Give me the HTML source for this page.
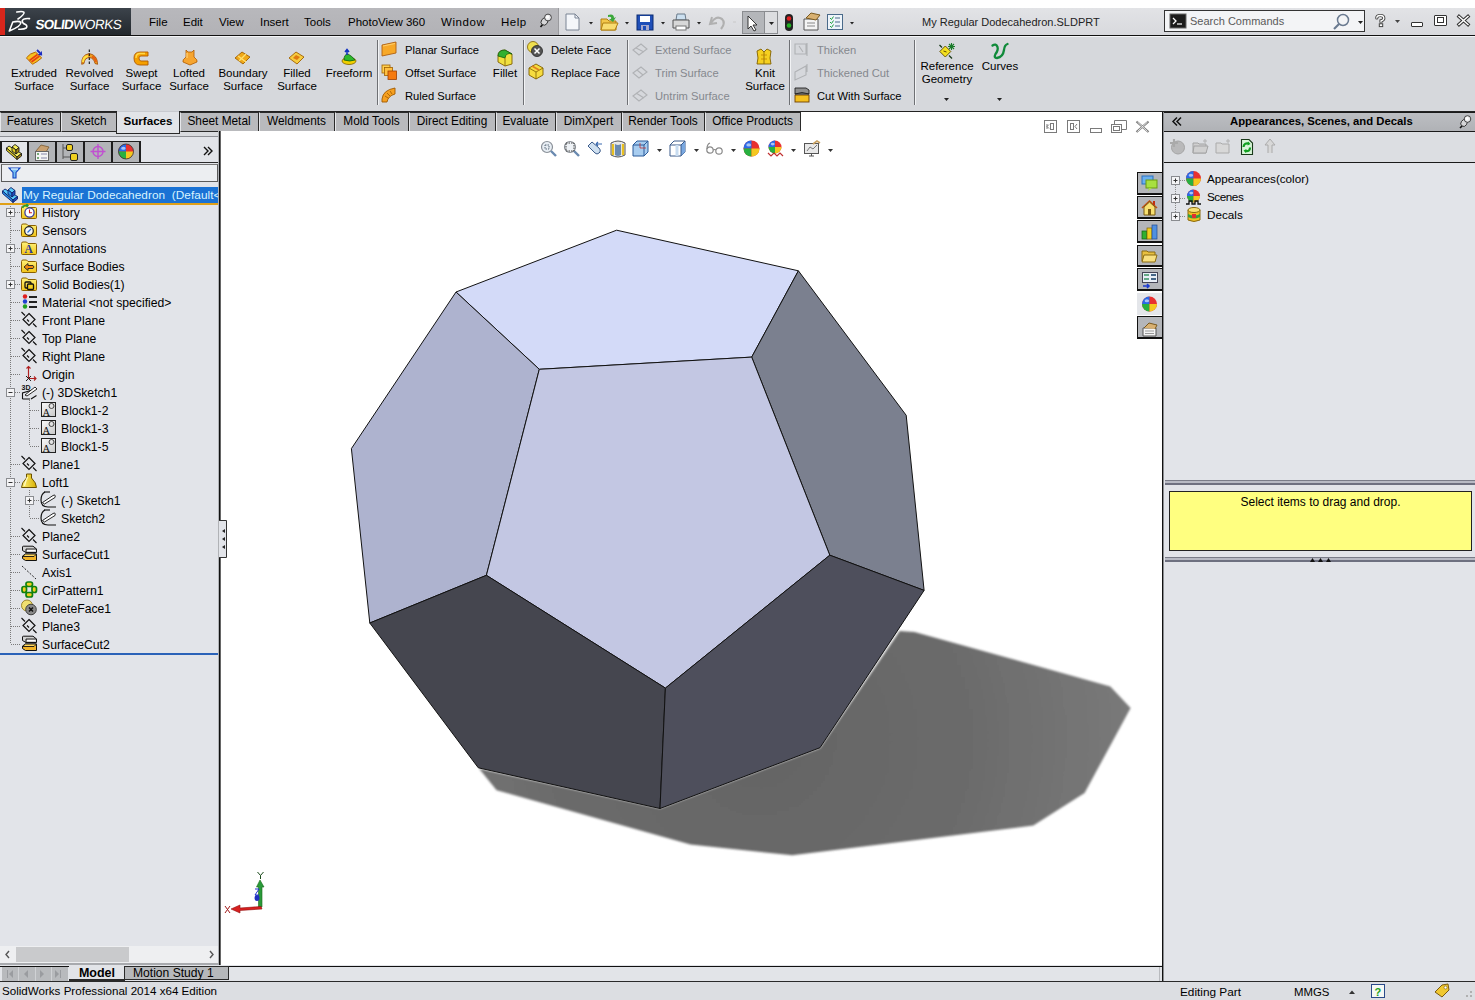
<!DOCTYPE html>
<html><head><meta charset="utf-8">
<style>
*{margin:0;padding:0;box-sizing:border-box}
html,body{width:1475px;height:1000px;overflow:hidden;background:#fff;font-family:"Liberation Sans",sans-serif;font-size:12px;color:#000}
.a{position:absolute}
.t{position:absolute;white-space:nowrap;line-height:14px}
</style></head><body>
<!-- title bar -->
<div class="a" style="left:0;top:8px;width:1475px;height:27px;background:linear-gradient(#e2e3e6,#d8d9dd)"></div>
<div class="a" style="left:0;top:8px;width:5px;height:27px;background:#d8261c"></div>
<div class="a" style="left:5px;top:8px;width:126px;height:27px;background:linear-gradient(#3c434b,#22272c)"></div>
<svg class="a" style="left:5px;top:8px" width="30" height="27" viewBox="5 8 30 27">
<g fill="none" stroke="#fff" stroke-width="1.6" stroke-linecap="round" stroke-linejoin="round">
<path d="M16.8 12 Q22.5 10.8 24 12.3 Q24.8 14 18 19"/>
<path d="M9.3 31 L12.8 22 Q19.5 20.5 20.8 22.5 Q21.5 26 9.3 31"/>
<path d="M29.5 18.6 Q23 18 22.2 21 Q22 23 25.5 24.5 Q27.8 26 26.2 28 Q24 29.5 18.8 29.2"/>
</g></svg>
<div class="t" style="left:35px;top:17px;font-size:13.4px;line-height:15px;color:#fff;font-weight:bold;letter-spacing:-0.7px;transform:skewX(-8deg);transform-origin:0 80%">SOLID<span style="font-weight:normal;letter-spacing:-0.45px">WORKS</span></div>
<div class="a" style="left:131px;top:8px;width:428px;height:27px;background:linear-gradient(#b8b8bc,#b2b2b6)"></div>
<div class="t" style="left:149px;top:15px;font-size:11.5px;color:#000">File</div>
<div class="t" style="left:183px;top:15px;font-size:11.5px;color:#000">Edit</div>
<div class="t" style="left:219px;top:15px;font-size:11.5px;color:#000">View</div>
<div class="t" style="left:260px;top:15px;font-size:11.5px;color:#000">Insert</div>
<div class="t" style="left:304px;top:15px;font-size:11.5px;color:#000">Tools</div>
<div class="t" style="left:348px;top:15px;font-size:11.5px;color:#000">PhotoView 360</div>
<div class="t" style="left:441px;top:15px;font-size:11.5px;color:#000;letter-spacing:0.6px">Window</div>
<div class="t" style="left:501px;top:15px;font-size:11.5px;color:#000;letter-spacing:0.5px">Help</div>
<svg class="a" style="left:536px;top:10px" width="22" height="22" viewBox="536 10 22 22"><path d="M543 24 L540.5 27" stroke="#111" stroke-width="1.6"/><ellipse cx="544.5" cy="21.5" rx="3.2" ry="3.8" transform="rotate(35 544.5 21.5)" fill="#d6d6d8" stroke="#333" stroke-width="0.9"/><circle cx="548" cy="17.5" r="3.4" fill="#ececee" stroke="#333" stroke-width="0.9"/><circle cx="547.5" cy="17" r="1.6" fill="#fff"/></svg><div class="a" style="left:558px;top:8px;width:1px;height:27px;background:#9a9a9e"></div>
<!-- quick access toolbar -->
<svg class="a" style="left:559px;top:8px" width="300" height="27" viewBox="559 8 300 27">
<g>
<path d="M566 14 H575 L579 18 V30 H566 Z" fill="#f4f6fa" stroke="#7a8494"/><path d="M575 14 V18 H579" fill="none" stroke="#7a8494"/>
<path d="M589 22 h4 l-2 2.5z" fill="#222"/>
<path d="M601 19 H607 L609 21 H616 V30 H601 Z" fill="#f2c64a" stroke="#b07e10"/><path d="M603 23 H618 L615 30 H601 Z" fill="#f8dc70" stroke="#b07e10"/><path d="M608 15 Q614 13 614 18 l2 -1 -3 5 -4 -3 2 0 Q612 16 608 17z" fill="#3ba83b"/>
<path d="M625 22 h4 l-2 2.5z" fill="#222"/>
<rect x="637" y="15" width="16" height="15" fill="#1f4fb8" stroke="#0a2a70"/><rect x="640" y="16" width="10" height="6" fill="#fff"/><rect x="641" y="25" width="8" height="5" fill="#aac"/><rect x="643" y="26" width="3" height="4" fill="#1f4fb8"/>
<path d="M661 22 h4 l-2 2.5z" fill="#222"/>
<path d="M677 14 H685 L686 20 H676 Z" fill="#cce0f0" stroke="#6a7a8a"/><path d="M673 20 H689 V28 H673 Z" fill="#d8d8d8" stroke="#555"/><rect x="676" y="26" width="10" height="4" fill="#fff" stroke="#777"/>
<path d="M697 22 h4 l-2 2.5z" fill="#222"/>
<path d="M712 17 L710 24 L717 23" fill="none" stroke="#b0b0b0" stroke-width="2"/><path d="M711 23 Q716 15 722 19 Q726 23 721 29" fill="none" stroke="#b0b0b0" stroke-width="2.2"/>
<path d="M733 22 h3" stroke="#c8c8c8"/>
<rect x="742.5" y="11.5" width="22" height="22" fill="#b4b6ba" stroke="#8a8c90"/><rect x="764.5" y="11.5" width="13" height="22" fill="#dcdde0" stroke="#8a8c90"/>
<path d="M748 16 L748 29 L751 26 L754 31 L756 30 L753 25 L757 25 Z" fill="#fff" stroke="#222" stroke-width="0.9"/>
<path d="M769 22 h5 l-2.5 3z" fill="#222"/>
<rect x="785" y="14" width="8" height="17" rx="4" fill="#222"/><circle cx="789" cy="18.5" r="2.3" fill="#e02020"/><circle cx="789" cy="25.5" r="2.3" fill="#20b020"/>
<path d="M804 19 H818 V30 H804 Z" fill="#f4f4f4" stroke="#555"/><path d="M806 18 L811 13 L820 15 L816 20 Z" fill="#d8b070" stroke="#7a5a20"/><path d="M807 23 H815 M807 26 H815" stroke="#888"/>
<rect x="827.5" y="14.5" width="15" height="15" fill="#eef4fa" stroke="#4a6a8a"/><path d="M830 18 l1.5 1.5 2-3 M830 22 l1.5 1.5 2-3 M830 26 l1.5 1.5 2-3" stroke="#20a040" fill="none"/><path d="M835 18 H840 M835 22 H840 M835 26 H840" stroke="#4a6a8a"/>
<path d="M850 22 h4 l-2 2.5z" fill="#222"/>
</g></svg>
<div class="t" style="left:922px;top:15px;font-size:11px;color:#222">My Regular Dodecahedron.SLDPRT</div>
<!-- search -->
<div class="a" style="left:1164px;top:10px;width:201px;height:22px;background:#f3f4f6;border:1px solid #333"></div>
<svg class="a" style="left:1169px;top:13px" width="18" height="16" viewBox="0 0 18 16"><rect x="1" y="1" width="16" height="14" fill="#1c1c1c" stroke="#666"/><path d="M4 5 L7 8 L4 11" stroke="#fff" fill="none" stroke-width="1.3"/><path d="M8 11 H13" stroke="#fff" stroke-width="1.2"/></svg>
<div class="t" style="left:1190px;top:14px;font-size:11px;color:#5a5a5a">Search Commands</div>
<svg class="a" style="left:1332px;top:12px" width="34" height="20" viewBox="0 0 34 20"><circle cx="11" cy="8" r="5.5" fill="none" stroke="#6a7a90" stroke-width="1.5"/><path d="M7 12 L2 17" stroke="#6a7a90" stroke-width="2.2"/><path d="M26 9 h5 l-2.5 3z" fill="#222"/></svg>
<svg class="a" style="left:1370px;top:10px" width="105" height="22" viewBox="1370 10 105 22">
<path d="M1376.8 18 Q1376.8 15.5 1380.3 15.5 Q1383.8 15.5 1383.8 18.2 Q1383.8 20 1381 20.8 V22" fill="none" stroke="#444" stroke-width="3.2" stroke-linecap="round"/><path d="M1376.8 18 Q1376.8 15.5 1380.3 15.5 Q1383.8 15.5 1383.8 18.2 Q1383.8 20 1381 20.8 V22" fill="none" stroke="#fff" stroke-width="1.3" stroke-linecap="round"/><rect x="1379.3" y="23.8" width="3.4" height="2.8" fill="#fff" stroke="#444" stroke-width="1"/>
<path d="M1395 20 h5 l-2.5 3z" fill="#444"/>
<rect x="1411.5" y="22.5" width="11" height="4" rx="0.5" fill="#fff" stroke="#333" stroke-width="1"/>
<rect x="1434.5" y="15.5" width="12" height="10" rx="0.5" fill="#fff" stroke="#333" stroke-width="1"/><rect x="1437.5" y="17.5" width="6" height="5" fill="#fff" stroke="#333" stroke-width="1"/>
<path d="M1459 16.5 L1468 24.5 M1468 16.5 L1459 24.5" stroke="#333" stroke-width="3.4" stroke-linecap="square"/><path d="M1459 16.5 L1468 24.5 M1468 16.5 L1459 24.5" stroke="#fff" stroke-width="1.5" stroke-linecap="square"/>
</svg>
<div class="a" style="left:0;top:35px;width:1475px;height:1px;background:#111"></div>
<div class="a" style="left:0;top:36px;width:1475px;height:1px;background:#f4f5f7"></div>
<!-- command manager -->
<div class="a" style="left:0;top:37px;width:1475px;height:75px;background:#d6d8dc"></div>
<div class="a" style="left:0;top:111px;width:1475px;height:1px;background:#222"></div>
<div class="t" style="left:-6px;width:80px;text-align:center;top:67px;font-size:11.5px;line-height:13.3px;color:#000">Extruded<br>Surface</div>
<div class="t" style="left:49.5px;width:80px;text-align:center;top:67px;font-size:11.5px;line-height:13.3px;color:#000">Revolved<br>Surface</div>
<div class="t" style="left:101.5px;width:80px;text-align:center;top:67px;font-size:11.5px;line-height:13.3px;color:#000">Swept<br>Surface</div>
<div class="t" style="left:149px;width:80px;text-align:center;top:67px;font-size:11.5px;line-height:13.3px;color:#000">Lofted<br>Surface</div>
<div class="t" style="left:203px;width:80px;text-align:center;top:67px;font-size:11.5px;line-height:13.3px;color:#000">Boundary<br>Surface</div>
<div class="t" style="left:257px;width:80px;text-align:center;top:67px;font-size:11.5px;line-height:13.3px;color:#000">Filled<br>Surface</div>
<div class="t" style="left:309px;width:80px;text-align:center;top:67px;font-size:11.5px;line-height:13.3px;color:#000">Freeform<br></div>
<div class="t" style="left:405px;top:43px;font-size:11.2px;color:#000">Planar Surface</div>
<div class="t" style="left:405px;top:66px;font-size:11.2px;color:#000">Offset Surface</div>
<div class="t" style="left:405px;top:89px;font-size:11.2px;color:#000">Ruled Surface</div>
<div class="t" style="left:551px;top:43px;font-size:11.2px;color:#000">Delete Face</div>
<div class="t" style="left:551px;top:66px;font-size:11.2px;color:#000">Replace Face</div>
<div class="t" style="left:655px;top:43px;font-size:11.2px;color:#85888e">Extend Surface</div>
<div class="t" style="left:655px;top:66px;font-size:11.2px;color:#85888e">Trim Surface</div>
<div class="t" style="left:655px;top:89px;font-size:11.2px;color:#85888e">Untrim Surface</div>
<div class="t" style="left:817px;top:43px;font-size:11.2px;color:#85888e">Thicken</div>
<div class="t" style="left:817px;top:66px;font-size:11.2px;color:#85888e">Thickened Cut</div>
<div class="t" style="left:817px;top:89px;font-size:11.2px;color:#000">Cut With Surface</div>
<div class="t" style="left:465px;width:80px;text-align:center;top:67px;font-size:11.5px;line-height:13.3px">Fillet</div>
<div class="t" style="left:725px;width:80px;text-align:center;top:67px;font-size:11.5px;line-height:13.3px">Knit<br>Surface</div>
<div class="t" style="left:907px;width:80px;text-align:center;top:60px;font-size:11.5px;line-height:13.3px">Reference<br>Geometry</div>
<div class="t" style="left:960px;width:80px;text-align:center;top:60px;font-size:11.5px;line-height:13.3px">Curves</div>
<div class="a" style="left:377px;top:40px;width:1px;height:65px;background:#6e7074"></div><div class="a" style="left:378px;top:40px;width:1px;height:65px;background:#f2f3f5"></div>
<div class="a" style="left:523px;top:40px;width:1px;height:65px;background:#6e7074"></div><div class="a" style="left:524px;top:40px;width:1px;height:65px;background:#f2f3f5"></div>
<div class="a" style="left:627px;top:40px;width:1px;height:65px;background:#6e7074"></div><div class="a" style="left:628px;top:40px;width:1px;height:65px;background:#f2f3f5"></div>
<div class="a" style="left:789px;top:40px;width:1px;height:65px;background:#6e7074"></div><div class="a" style="left:790px;top:40px;width:1px;height:65px;background:#f2f3f5"></div>
<div class="a" style="left:914px;top:40px;width:1px;height:65px;background:#6e7074"></div><div class="a" style="left:915px;top:40px;width:1px;height:65px;background:#f2f3f5"></div>
<svg class="a" style="left:0;top:37px" width="1030" height="74" viewBox="0 37 1030 74">
<!-- extruded -->
<path d="M26.4 57.9 Q30 53 35.6 52.1 L41.7 57.9 Q37 62 32.5 64.3z" fill="#f6c020" stroke="#b06000" stroke-width="0.9" stroke-linejoin="round"/>
<path d="M29.5 60.5 L37.5 54.5 M31.5 62 L39.5 56" stroke="#e84010" stroke-width="1.6"/>
<path d="M37 50 L40 53" stroke="#1a2ac0" stroke-width="1.8"/><path d="M42.2 55.5 L37.8 55 L41.8 51z" fill="#1a2ac0"/>
<!-- revolved -->
<path d="M81.7 64.3 Q81 55 89.2 53.5 Q97.5 55 97.6 64.3 L95 63.5 Q94 58 89.2 57.5 Q84.5 58 84 63.5z" fill="#f0a020" stroke="#a04800" stroke-width="0.8" stroke-linejoin="round"/>
<path d="M83 62 Q83 57 88 56" stroke="#ffe040" stroke-width="2" fill="none"/>
<path d="M92 56.5 Q95.5 58 96 62" stroke="#e86010" stroke-width="2" fill="none"/>
<path d="M89.3 49.5 V65" stroke="#111" stroke-width="1.1" stroke-dasharray="2.5 1.5"/>
<!-- swept -->
<g transform="translate(133,50)">
<path d="M15 2 H7 Q1 2 1 8 Q1 15 7 15 H15 V11 H8 Q6 11 6 8 Q6 6 8 6 H15z" fill="#f5a000" stroke="#b05a00" stroke-width="0.9"/>
<path d="M12 3.5 H7 Q3 3.5 3 8" stroke="#ffd84a" stroke-width="1.4" fill="none"/>
</g>
<!-- lofted -->
<g transform="translate(182,49)">
<path d="M4 1 L6 3 L10 3 L12 1 L12 8 Q16 11 15 13 L8 16 L1 13 Q0 11 4 8z" fill="#f6a530" stroke="#b05a00" stroke-width="0.8"/>
<path d="M5 4 L5 9" stroke="#ffd070" stroke-width="1.3"/>
</g>
<!-- boundary -->
<g transform="translate(234,51)">
<path d="M1 7 L8 1 L16 6 L9 13z" fill="#f0a818" stroke="#a06000" stroke-width="0.9"/>
<path d="M4 5 L12 11 M12 3 L5 10" stroke="#ffe070" stroke-width="1.3"/>
</g>
<!-- filled -->
<g transform="translate(288,51)">
<path d="M1 7 L8 1 L16 6 L9 13z" fill="#f6cc40" stroke="#a06000" stroke-width="0.9"/>
<path d="M5 7 L8 4 L12 6 L9 9z" fill="#e07a10"/>
</g>
<!-- freeform -->
<g transform="translate(341,49)">
<ellipse cx="8" cy="12" rx="7" ry="3.5" fill="#f0d000" stroke="#806000" stroke-width="0.8"/>
<path d="M3 11 Q3 5 7 5 Q11 7 14 11 Q9 13 3 11z" fill="#2eb82e" stroke="#106010" stroke-width="0.8"/>
<path d="M6 6 V1 M4 3 L6 0.5 L8 3" stroke="#1030c0" stroke-width="1.5" fill="none"/>
</g>
<!-- planar -->
<g transform="translate(381,41)">
<path d="M1 4 L15 1 V12 L1 15z" fill="#f7a828" stroke="#b06010" stroke-width="0.9"/>
<path d="M2 5 L14 2.5" stroke="#ffd070" stroke-width="1"/>
</g>
<!-- offset -->
<g transform="translate(381,64)">
<rect x="1" y="1" width="8" height="8" fill="#ffd050" stroke="#a06000" stroke-width="0.8"/>
<rect x="3.5" y="3.5" width="8" height="8" fill="#ffc040" stroke="#a06000" stroke-width="0.8"/>
<rect x="7" y="7" width="8.5" height="8.5" fill="#f57a10" stroke="#a04000" stroke-width="0.8"/>
</g>
<!-- ruled -->
<g transform="translate(381,87)">
<path d="M1 12 Q2 3 14 1 V7 Q7 9 6 15 H1z" fill="#f6a020" stroke="#a05a00" stroke-width="0.9"/>
<path d="M4 9 L7 11 M6 6 L9 9 M9 4 L11 7" stroke="#a05a00" stroke-width="0.8"/>
</g>
<!-- fillet -->
<g transform="translate(497,49)">
<path d="M1 7 Q1 1 8 1 L15 5 V15 L8 17 L1 13z" fill="#f0e040" stroke="#806000" stroke-width="0.9"/>
<path d="M1 7 Q1 1 8 1 L15 5 Q9 3 8 9 L1 7z" fill="#30b030" stroke="#106010" stroke-width="0.8"/>
<path d="M8 9 V17" stroke="#806000" stroke-width="0.8"/>
</g>
<!-- delete face -->
<g transform="translate(527,41)">
<ellipse cx="6" cy="6" rx="5.5" ry="5.5" fill="#f0e050" stroke="#806000" stroke-width="0.8"/>
<circle cx="10" cy="10" r="5.5" fill="#555" stroke="#222" stroke-width="0.8"/>
<path d="M7.5 7.5 L12.5 12.5 M12.5 7.5 L7.5 12.5" stroke="#fff" stroke-width="1.5"/>
</g>
<!-- replace face -->
<g transform="translate(528,63)">
<path d="M1 5 L8 1 L15 5 V12 L8 16 L1 12z" fill="#f6dc40" stroke="#806000" stroke-width="0.9"/>
<path d="M1 5 L8 9 L15 5 M8 9 V16" stroke="#806000" stroke-width="0.8" fill="none"/>
<path d="M4 3 L11 7" stroke="#e08020" stroke-width="1.5"/>
</g>
<!-- extend/trim/untrim gray -->
<g fill="none" stroke="#b0b2b5" stroke-width="1.1">
<path d="M633 50 L641 44 L647 49 L639 55z M636 48 L644 52"/>
<path d="M633 73 L641 67 L647 72 L639 78z M637 70 L643 75"/>
<path d="M633 96 L641 90 L647 95 L639 101z M636 93 L644 98"/>
<path d="M795 44 H806 V54 H795z M807 43 V56 M799 46 L803 52"/>
<path d="M795 72 L806 66 V75 L795 80z M807 64 V72"/>
</g>
<!-- knit -->
<g transform="translate(756,48)">
<path d="M1 3 L5 1 L8 4 L11 1 L15 3 L14 10 L15 16 H1 L2 10z" fill="#f5d020" stroke="#806000" stroke-width="0.9"/>
<path d="M8 4 V16" stroke="#806000" stroke-width="0.8"/><path d="M5 7 H11 M5 11 H11" stroke="#c08000" stroke-width="0.8"/>
</g>
<!-- cut with surface -->
<g transform="translate(794,87)">
<rect x="1" y="8" width="14" height="7" fill="#f5c020" stroke="#704000" stroke-width="0.9"/>
<path d="M1 1 H12 L15 3 V7 H1z" fill="#909090" stroke="#202020" stroke-width="0.9"/>
<path d="M1 7 Q8 4 15 7" stroke="#202020" stroke-width="0.9" fill="none"/>
</g>
<!-- reference geometry -->
<path d="M939.5 45 L942 47.5 M949 55.5 L952 58.5" stroke="#1a3a1a" stroke-width="1.3"/>
<path d="M945.3 46 L950.8 51.5 L945.3 57 L939.8 51.5z" fill="#f4e020" stroke="#5a4a00" stroke-width="0.9"/>
<path d="M943.5 51 L946.5 52" stroke="#5a4a00" stroke-width="1"/>
<path d="M951.5 43 V50 M948 46.5 H955 M949 44 L954 49 M954 44 L949 49" stroke="#1a7a2a" stroke-width="1.1"/>
<path d="M944 98 h5 l-2.5 3z" fill="#222"/>
<!-- curves -->
<path d="M992.5 45.5 Q996 43 997.5 47 Q998.5 50 995.5 54 Q993.5 58 997 58 Q1003 57 1004 50 Q1004.5 45 1007.5 44" fill="none" stroke="#108a3a" stroke-width="2.3" stroke-linecap="round"/>
<path d="M997 98 h5 l-2.5 3z" fill="#222"/>
</svg>
<!-- tabs row -->
<div class="a" style="left:0;top:112px;width:1475px;height:24px;background:#fff"></div>
<div class="a" style="left:0px;top:112px;width:60px;height:20px;background:#b9babd;border-top:1px solid #2a2a2a;border-bottom:1px solid #2a2a2a;border-left:1px solid #e6e7ea"></div>
<div class="t" style="left:0px;width:60px;text-align:center;top:114px;font-size:11.85px;color:#000">Features</div>
<div class="a" style="left:60px;top:112px;width:1px;height:20px;background:#2a2a2a"></div>
<div class="a" style="left:61px;top:112px;width:55px;height:20px;background:#b9babd;border-top:1px solid #2a2a2a;border-bottom:1px solid #2a2a2a;border-left:1px solid #e6e7ea"></div>
<div class="t" style="left:61px;width:55px;text-align:center;top:114px;font-size:11.85px;color:#000">Sketch</div>
<div class="a" style="left:116px;top:112px;width:1px;height:20px;background:#2a2a2a"></div>
<div class="a" style="left:117px;top:111px;width:62px;height:23px;background:#e2e4e8;border-bottom:1px solid #2a2a2a;border-top:1px solid #c8cacf"></div>
<div class="t" style="left:117px;width:62px;text-align:center;top:114px;font-size:11.6px;font-weight:bold;color:#000">Surfaces</div>
<div class="a" style="left:179px;top:112px;width:1px;height:20px;background:#2a2a2a"></div>
<div class="a" style="left:180px;top:112px;width:78px;height:20px;background:#b9babd;border-top:1px solid #2a2a2a;border-bottom:1px solid #2a2a2a;border-left:1px solid #e6e7ea"></div>
<div class="t" style="left:180px;width:78px;text-align:center;top:114px;font-size:11.85px;color:#000">Sheet Metal</div>
<div class="a" style="left:258px;top:112px;width:1px;height:20px;background:#2a2a2a"></div>
<div class="a" style="left:259px;top:112px;width:75px;height:20px;background:#b9babd;border-top:1px solid #2a2a2a;border-bottom:1px solid #2a2a2a;border-left:1px solid #e6e7ea"></div>
<div class="t" style="left:259px;width:75px;text-align:center;top:114px;font-size:11.85px;color:#000">Weldments</div>
<div class="a" style="left:334px;top:112px;width:1px;height:20px;background:#2a2a2a"></div>
<div class="a" style="left:335px;top:112px;width:73px;height:20px;background:#b9babd;border-top:1px solid #2a2a2a;border-bottom:1px solid #2a2a2a;border-left:1px solid #e6e7ea"></div>
<div class="t" style="left:335px;width:73px;text-align:center;top:114px;font-size:11.85px;color:#000">Mold Tools</div>
<div class="a" style="left:408px;top:112px;width:1px;height:20px;background:#2a2a2a"></div>
<div class="a" style="left:409px;top:112px;width:86px;height:20px;background:#b9babd;border-top:1px solid #2a2a2a;border-bottom:1px solid #2a2a2a;border-left:1px solid #e6e7ea"></div>
<div class="t" style="left:409px;width:86px;text-align:center;top:114px;font-size:11.85px;color:#000">Direct Editing</div>
<div class="a" style="left:495px;top:112px;width:1px;height:20px;background:#2a2a2a"></div>
<div class="a" style="left:496px;top:112px;width:59px;height:20px;background:#b9babd;border-top:1px solid #2a2a2a;border-bottom:1px solid #2a2a2a;border-left:1px solid #e6e7ea"></div>
<div class="t" style="left:496px;width:59px;text-align:center;top:114px;font-size:11.85px;color:#000">Evaluate</div>
<div class="a" style="left:555px;top:112px;width:1px;height:20px;background:#2a2a2a"></div>
<div class="a" style="left:556px;top:112px;width:65px;height:20px;background:#b9babd;border-top:1px solid #2a2a2a;border-bottom:1px solid #2a2a2a;border-left:1px solid #e6e7ea"></div>
<div class="t" style="left:556px;width:65px;text-align:center;top:114px;font-size:11.85px;color:#000">DimXpert</div>
<div class="a" style="left:621px;top:112px;width:1px;height:20px;background:#2a2a2a"></div>
<div class="a" style="left:622px;top:112px;width:82px;height:20px;background:#b9babd;border-top:1px solid #2a2a2a;border-bottom:1px solid #2a2a2a;border-left:1px solid #e6e7ea"></div>
<div class="t" style="left:622px;width:82px;text-align:center;top:114px;font-size:11.85px;color:#000">Render Tools</div>
<div class="a" style="left:704px;top:112px;width:1px;height:20px;background:#2a2a2a"></div>
<div class="a" style="left:705px;top:112px;width:95px;height:20px;background:#b9babd;border-top:1px solid #2a2a2a;border-bottom:1px solid #2a2a2a;border-left:1px solid #e6e7ea"></div>
<div class="t" style="left:705px;width:95px;text-align:center;top:114px;font-size:11.85px;color:#000">Office Products</div>
<div class="a" style="left:800px;top:112px;width:1px;height:20px;background:#2a2a2a"></div>
<!-- left panel -->
<div class="a" style="left:0;top:132px;width:219px;height:833px;background:#e2e4e9"></div>
<div class="a" style="left:0;top:132px;width:219px;height:4px;background:#d9dbdf"></div>
<div class="a" style="left:0;top:136px;width:219px;height:1px;background:#8e9096"></div>
<div class="a" style="left:116px;top:132px;width:64px;height:1px;background:#e2e4e8"></div><div class="a" style="left:116px;top:112px;width:1px;height:22px;background:#2a2a2a"></div><div class="a" style="left:179px;top:112px;width:1px;height:22px;background:#2a2a2a"></div><div class="a" style="left:116px;top:133px;width:64px;height:1px;background:#2a2a2a"></div>
<div class="a" style="left:0;top:137px;width:219px;height:4px;background:#e2e4e9"></div>
<div class="a" style="left:0;top:141px;width:141px;height:1px;background:#1e1e1e"></div>
<div class="a" style="left:0;top:142px;width:219px;height:20px;background:#e2e4e9"></div>
<div class="a" style="left:0;top:162px;width:219px;height:1px;background:#2a2a2a"></div>
<div class="a" style="left:1px;top:142px;width:26px;height:20px;background:#e3e5e9"></div><div class="a" style="left:27px;top:141px;width:2px;height:21px;background:#1e1e1e"></div>
<div class="a" style="left:29px;top:142px;width:26px;height:20px;background:#b2b4b7"></div><div class="a" style="left:55px;top:141px;width:2px;height:21px;background:#1e1e1e"></div>
<div class="a" style="left:57px;top:142px;width:26px;height:20px;background:#b2b4b7"></div><div class="a" style="left:83px;top:141px;width:2px;height:21px;background:#1e1e1e"></div>
<div class="a" style="left:85px;top:142px;width:26px;height:20px;background:#b2b4b7"></div><div class="a" style="left:111px;top:141px;width:2px;height:21px;background:#1e1e1e"></div>
<div class="a" style="left:113px;top:142px;width:26px;height:20px;background:#b2b4b7"></div><div class="a" style="left:139px;top:141px;width:2px;height:21px;background:#1e1e1e"></div>
<div class="a" style="left:0;top:141px;width:1.5px;height:21px;background:#1e1e1e"></div>
<svg class="a" style="left:0;top:141px" width="219" height="22" viewBox="0 141 219 22">
<g transform="translate(6,143)"><path d="M0.5 5 L3 3 L15.5 10.5 L11 14z" fill="#f6ee58" stroke="#1a1a1a" stroke-width="0.9" stroke-linejoin="round"/><path d="M0.5 5 L11 14 V16.5 L0.5 7.5z" fill="#e0cc20" stroke="#1a1a1a" stroke-width="0.9" stroke-linejoin="round"/><path d="M11 14 L15.5 10.5 V13 L11 16.5z" fill="#a88a10" stroke="#1a1a1a" stroke-width="0.9" stroke-linejoin="round"/><path d="M6 4 L9 1.5 L13 4.5 L10 7z" fill="#f6ee58" stroke="#1a1a1a" stroke-width="0.9" stroke-linejoin="round"/><path d="M6 4 L10 7 V11 L6 8z" fill="#e0cc20" stroke="#1a1a1a" stroke-width="0.9" stroke-linejoin="round"/><path d="M10 7 L13 4.5 V8.5 L10 11z" fill="#a88a10" stroke="#1a1a1a" stroke-width="0.9" stroke-linejoin="round"/></g>
<g transform="translate(33,143)"><path d="M3 8 L8 2 L16 4 L13 9" fill="#c8a070" stroke="#7a5a30" stroke-width="0.8"/><rect x="2.5" y="8.5" width="13" height="9" fill="#f4f4f4" stroke="#666"/><rect x="4" y="10" width="2" height="2" fill="#7a7"/><rect x="4" y="14" width="2" height="2" fill="#7a7"/><path d="M8 11 H14 M8 15 H14" stroke="#88a"/></g>
<g transform="translate(61,143)"><path d="M2 1 V16 M2 5 H6 M2 14 H9" stroke="#555" fill="none"/><rect x="5.5" y="1.5" width="6" height="6" rx="1.5" fill="#f0d020" stroke="#222"/><rect x="9.5" y="10.5" width="7" height="7" rx="1.5" fill="#f0d020" stroke="#222"/></g>
<g transform="translate(90,144)" fill="none" stroke="#c050d0" stroke-width="1.4"><circle cx="8" cy="7.5" r="5"/><path d="M8 0 V15 M0.5 7.5 H15.5"/></g>
<g transform="translate(118,143)"><circle cx="8" cy="8.5" r="7.5" fill="#e83030"/><path d="M8 8.5 V1.0 A7.5 7.5 0 0 0 0.5 8.5z" fill="#2a6ae8"/><path d="M8 8.5 H0.5 A7.5 7.5 0 0 0 8 16.0z" fill="#28b040"/><path d="M8 8.5 V16.0 A7.5 7.5 0 0 0 15.5 8.5z" fill="#f4c820"/><ellipse cx="5.375" cy="5.125" rx="2.25" ry="1.5" fill="#fff" opacity="0.6"/><circle cx="8" cy="8.5" r="7.5" fill="none" stroke="#333" stroke-width="0.8"/></g>
<path d="M204 147 L208 151 L204 155 M208 147 L212 151 L208 155" fill="none" stroke="#111" stroke-width="1.4"/>
</svg>
<div class="a" style="left:1px;top:164px;width:217px;height:18px;background:#eceef1;border:1px solid #5a5a5a;border-top-color:#777"></div>
<svg class="a" style="left:8px;top:167px" width="13" height="12" viewBox="0 0 13 12"><path d="M1 1 H12 L8 5.5 V11 H5 V5.5z" fill="#7ac0f0" stroke="#1040c0" stroke-width="1.1"/><path d="M3 2 H10" stroke="#fff"/></svg>
<div class="a" style="left:22px;top:187px;width:197px;height:16px;background:#1a72d4"></div>
<div class="a" style="left:0;top:203px;width:219px;height:2px;background:#e0a018"></div>
<svg class="a" style="left:2px;top:186px" width="17" height="18" viewBox="0 0 17 18"><path d="M0.5 5 L3 3 L15.5 10.5 L11 14z" fill="#58c8f8" stroke="#10206a" stroke-width="0.9" stroke-linejoin="round"/><path d="M0.5 5 L11 14 V16.5 L0.5 7.5z" fill="#2890e8" stroke="#10206a" stroke-width="0.9" stroke-linejoin="round"/><path d="M11 14 L15.5 10.5 V13 L11 16.5z" fill="#2050c0" stroke="#10206a" stroke-width="0.9" stroke-linejoin="round"/><path d="M6 4 L9 1.5 L13 4.5 L10 7z" fill="#58c8f8" stroke="#10206a" stroke-width="0.9" stroke-linejoin="round"/><path d="M6 4 L10 7 V11 L6 8z" fill="#2890e8" stroke="#10206a" stroke-width="0.9" stroke-linejoin="round"/><path d="M10 7 L13 4.5 V8.5 L10 11z" fill="#2050c0" stroke="#10206a" stroke-width="0.9" stroke-linejoin="round"/></svg>
<div class="t" style="left:23px;top:188px;font-size:11.8px;color:#d8f4ff;letter-spacing:0.05px">My Regular Dodecahedron&nbsp; (Default&lt;</div>
<svg width="0" height="0" style="position:absolute"><defs><linearGradient id="fold" x1="0" y1="0" x2="0" y2="1"><stop offset="0" stop-color="#fff27a"/><stop offset="1" stop-color="#f2c418"/></linearGradient><linearGradient id="blk" x1="0" y1="0" x2="1" y2="1"><stop offset="0" stop-color="#fafafa"/><stop offset="1" stop-color="#c8c8c8"/></linearGradient><linearGradient id="bell" x1="0" y1="0" x2="1" y2="0"><stop offset="0" stop-color="#fff27a"/><stop offset="1" stop-color="#d8b000"/></linearGradient></defs></svg>
<div class="t" style="left:42px;top:206px;font-size:12.2px;color:#000">History</div>
<svg class="a" style="left:21px;top:203px" width="17" height="17" viewBox="0 0 17 17"><path d="M0.5 4.5 Q0.5 3 2 3 H5.5 L7 4.5 H14.5 Q15.5 4.5 15.5 5.5 V14.5 Q15.5 15.5 14.5 15.5 H1.5 Q0.5 15.5 0.5 14.5z" fill="url(#fold)" stroke="#8a6000"/><circle cx="8.5" cy="9.5" r="4.6" fill="#fff" stroke="#3a3aa0" stroke-width="1.3"/><path d="M8.5 6.5 V9.8 H11" stroke="#d02020" stroke-width="1.1" fill="none"/><path d="M1.5 5 Q3 1.5 7 2.5 M5.5 1 L7 2.5 L5.5 4" stroke="#20a030" stroke-width="1.4" fill="none"/></svg>
<div class="t" style="left:42px;top:224px;font-size:12.2px;color:#000">Sensors</div>
<svg class="a" style="left:21px;top:221px" width="17" height="17" viewBox="0 0 17 17"><path d="M0.5 4.5 Q0.5 3 2 3 H5.5 L7 4.5 H14.5 Q15.5 4.5 15.5 5.5 V14.5 Q15.5 15.5 14.5 15.5 H1.5 Q0.5 15.5 0.5 14.5z" fill="url(#fold)" stroke="#8a6000"/><circle cx="8" cy="10" r="4.3" fill="#f4f6fa" stroke="#222" stroke-width="1.2"/><path d="M6.5 11.5 L10 8" stroke="#2a70d0" stroke-width="1.3"/></svg>
<div class="t" style="left:42px;top:242px;font-size:12.2px;color:#000">Annotations</div>
<svg class="a" style="left:21px;top:239px" width="17" height="17" viewBox="0 0 17 17"><path d="M0.5 4.5 Q0.5 3 2 3 H5.5 L7 4.5 H14.5 Q15.5 4.5 15.5 5.5 V14.5 Q15.5 15.5 14.5 15.5 H1.5 Q0.5 15.5 0.5 14.5z" fill="url(#fold)" stroke="#8a6000"/><text x="3.5" y="14" font-family="Liberation Serif" font-size="11.5" font-weight="bold" fill="#2a3a9a">A</text></svg>
<div class="t" style="left:42px;top:260px;font-size:12.2px;color:#000">Surface Bodies</div>
<svg class="a" style="left:21px;top:257px" width="17" height="17" viewBox="0 0 17 17"><path d="M0.5 4.5 Q0.5 3 2 3 H5.5 L7 4.5 H14.5 Q15.5 4.5 15.5 5.5 V14.5 Q15.5 15.5 14.5 15.5 H1.5 Q0.5 15.5 0.5 14.5z" fill="url(#fold)" stroke="#8a6000"/><path d="M3 10 L7 6.5 V8.5 H12 L13 10 L12 11.5 H7 V13.5z" fill="#f08a10" stroke="#222" stroke-width="0.9" stroke-linejoin="round"/></svg>
<div class="t" style="left:42px;top:278px;font-size:12.2px;color:#000">Solid Bodies(1)</div>
<svg class="a" style="left:21px;top:275px" width="17" height="17" viewBox="0 0 17 17"><path d="M0.5 4.5 Q0.5 3 2 3 H5.5 L7 4.5 H14.5 Q15.5 4.5 15.5 5.5 V14.5 Q15.5 15.5 14.5 15.5 H1.5 Q0.5 15.5 0.5 14.5z" fill="url(#fold)" stroke="#8a6000"/><rect x="4" y="7" width="6" height="6" rx="1" fill="none" stroke="#111" stroke-width="1.3"/><rect x="6.5" y="9" width="6" height="5.5" rx="1" fill="#f4d020" stroke="#111" stroke-width="1.3"/></svg>
<div class="t" style="left:42px;top:296px;font-size:12.2px;color:#000">Material &lt;not specified&gt;</div>
<svg class="a" style="left:21px;top:293px" width="17" height="17" viewBox="0 0 17 17"><circle cx="4" cy="3.5" r="2.2" fill="#e02020"/><circle cx="4" cy="8.5" r="2.2" fill="#2040d0"/><circle cx="4" cy="13.5" r="2.2" fill="#20a020"/><path d="M8 4 H16 M8 9 H16 M8 14 H16" stroke="#222" stroke-width="1.8"/></svg>
<div class="t" style="left:42px;top:314px;font-size:12.2px;color:#000">Front Plane</div>
<svg class="a" style="left:21px;top:311px" width="17" height="17" viewBox="0 0 17 17"><path d="M8 2.5 L14 8.5 L8 14.5 L2 8.5z" fill="none" stroke="#111" stroke-width="1.2"/><path d="M0.5 1 L4 4.5 M12 12.5 L15.5 16 M6 8.5 L8 10.5" stroke="#111" stroke-width="1.1"/></svg>
<div class="t" style="left:42px;top:332px;font-size:12.2px;color:#000">Top Plane</div>
<svg class="a" style="left:21px;top:329px" width="17" height="17" viewBox="0 0 17 17"><path d="M8 2.5 L14 8.5 L8 14.5 L2 8.5z" fill="none" stroke="#111" stroke-width="1.2"/><path d="M0.5 1 L4 4.5 M12 12.5 L15.5 16 M6 8.5 L8 10.5" stroke="#111" stroke-width="1.1"/></svg>
<div class="t" style="left:42px;top:350px;font-size:12.2px;color:#000">Right Plane</div>
<svg class="a" style="left:21px;top:347px" width="17" height="17" viewBox="0 0 17 17"><path d="M8 2.5 L14 8.5 L8 14.5 L2 8.5z" fill="none" stroke="#111" stroke-width="1.2"/><path d="M0.5 1 L4 4.5 M12 12.5 L15.5 16 M6 8.5 L8 10.5" stroke="#111" stroke-width="1.1"/></svg>
<div class="t" style="left:42px;top:368px;font-size:12.2px;color:#000">Origin</div>
<svg class="a" style="left:21px;top:365px" width="17" height="17" viewBox="0 0 17 17"><path d="M7.5 1.5 V13.5 H15" fill="none" stroke="#b02020" stroke-width="1.2"/><path d="M5.5 3.5 L7.5 1.5 L9.5 3.5 M13 11.5 L15 13.5 L13 15.5" fill="none" stroke="#b02020" stroke-width="1.1"/><path d="M5 11 L10 16 M10 11 L5 16" stroke="#222" stroke-width="1"/></svg>
<div class="t" style="left:42px;top:386px;font-size:12.2px;color:#000">(-) 3DSketch1</div>
<svg class="a" style="left:21px;top:383px" width="17" height="17" viewBox="0 0 17 17"><text x="0.5" y="6.5" font-family="Liberation Sans" font-size="7" font-weight="bold" fill="#111">3D</text><path d="M1.5 16 V10 L13 6.5 M1.5 16 H9 M10 16 L15.5 12.5" fill="none" stroke="#111" stroke-width="1.1"/><path d="M4 12 L14 4 L16 6 L6 13z" fill="#fff" stroke="#111" stroke-width="0.9"/></svg>
<div class="t" style="left:61px;top:404px;font-size:12.2px;color:#000">Block1-2</div>
<svg class="a" style="left:40px;top:401px" width="17" height="17" viewBox="0 0 17 17"><rect x="1.5" y="1.5" width="14" height="14" fill="url(#blk)" stroke="#222"/><text x="2.5" y="14.5" font-family="Liberation Serif" font-size="10.5" fill="#111">A</text><circle cx="11.5" cy="5" r="2.5" fill="none" stroke="#444"/></svg>
<div class="t" style="left:61px;top:422px;font-size:12.2px;color:#000">Block1-3</div>
<svg class="a" style="left:40px;top:419px" width="17" height="17" viewBox="0 0 17 17"><rect x="1.5" y="1.5" width="14" height="14" fill="url(#blk)" stroke="#222"/><text x="2.5" y="14.5" font-family="Liberation Serif" font-size="10.5" fill="#111">A</text><circle cx="11.5" cy="5" r="2.5" fill="none" stroke="#444"/></svg>
<div class="t" style="left:61px;top:440px;font-size:12.2px;color:#000">Block1-5</div>
<svg class="a" style="left:40px;top:437px" width="17" height="17" viewBox="0 0 17 17"><rect x="1.5" y="1.5" width="14" height="14" fill="url(#blk)" stroke="#222"/><text x="2.5" y="14.5" font-family="Liberation Serif" font-size="10.5" fill="#111">A</text><circle cx="11.5" cy="5" r="2.5" fill="none" stroke="#444"/></svg>
<div class="t" style="left:42px;top:458px;font-size:12.2px;color:#000">Plane1</div>
<svg class="a" style="left:21px;top:455px" width="17" height="17" viewBox="0 0 17 17"><path d="M8 2.5 L14 8.5 L8 14.5 L2 8.5z" fill="none" stroke="#111" stroke-width="1.2"/><path d="M0.5 1 L4 4.5 M12 12.5 L15.5 16 M6 8.5 L8 10.5" stroke="#111" stroke-width="1.1"/></svg>
<div class="t" style="left:42px;top:476px;font-size:12.2px;color:#000">Loft1</div>
<svg class="a" style="left:21px;top:473px" width="17" height="17" viewBox="0 0 17 17"><path d="M5.5 1 H10.5 L10.5 5 Q15.5 10 15.5 14.5 H0.5 Q0.5 10 5.5 5z" fill="url(#bell)" stroke="#6a5000"/><path d="M6.5 4 Q4 10 3.5 13" stroke="#fffbc0" stroke-width="1.3" fill="none"/></svg>
<div class="t" style="left:61px;top:494px;font-size:12.2px;color:#000">(-) Sketch1</div>
<svg class="a" style="left:40px;top:491px" width="17" height="17" viewBox="0 0 17 17"><path d="M5 1 Q1 3 1 9 Q1 16 8 16 H16" fill="none" stroke="#111" stroke-width="1.2"/><path d="M2.5 11.5 L13 4.5 Q16 3 15 6.5 L4.5 13z" fill="#fff" stroke="#111" stroke-width="0.9"/><path d="M4 1 H10" stroke="#111" stroke-width="1.1"/></svg>
<div class="t" style="left:61px;top:512px;font-size:12.2px;color:#000">Sketch2</div>
<svg class="a" style="left:40px;top:509px" width="17" height="17" viewBox="0 0 17 17"><path d="M5 1 Q1 3 1 9 Q1 16 8 16 H16" fill="none" stroke="#111" stroke-width="1.2"/><path d="M2.5 11.5 L13 4.5 Q16 3 15 6.5 L4.5 13z" fill="#fff" stroke="#111" stroke-width="0.9"/><path d="M4 1 H10" stroke="#111" stroke-width="1.1"/></svg>
<div class="t" style="left:42px;top:530px;font-size:12.2px;color:#000">Plane2</div>
<svg class="a" style="left:21px;top:527px" width="17" height="17" viewBox="0 0 17 17"><path d="M8 2.5 L14 8.5 L8 14.5 L2 8.5z" fill="none" stroke="#111" stroke-width="1.2"/><path d="M0.5 1 L4 4.5 M12 12.5 L15.5 16 M6 8.5 L8 10.5" stroke="#111" stroke-width="1.1"/></svg>
<div class="t" style="left:42px;top:548px;font-size:12.2px;color:#000">SurfaceCut1</div>
<svg class="a" style="left:21px;top:545px" width="17" height="17" viewBox="0 0 17 17"><path d="M1.5 11 L4.5 9 H15.5 V15.5 H4.5 L1.5 13.5z" fill="#f2b428" stroke="#111" stroke-width="1" stroke-linejoin="round"/><path d="M4.5 9 H15.5 L13 11.5 H1.5z" fill="#ffd860" stroke="#111" stroke-width="0.9" stroke-linejoin="round"/><path d="M1.5 2 Q1.5 1.2 2.5 1.2 H12 L15.5 4 V7.5 H5 L1.5 5.5z" fill="#d0d0d0" stroke="#111" stroke-width="1" stroke-linejoin="round"/><path d="M5 4 H15.5 M5 4 V7.5" stroke="#111" stroke-width="0.9" fill="none"/><path d="M6 5.5 H14.5" stroke="#fff" stroke-width="1.1"/></svg>
<div class="t" style="left:42px;top:566px;font-size:12.2px;color:#000">Axis1</div>
<svg class="a" style="left:21px;top:563px" width="17" height="17" viewBox="0 0 17 17"><path d="M1 3 L15 16" stroke="#222" stroke-width="1" stroke-dasharray="2 1.5"/></svg>
<div class="t" style="left:42px;top:584px;font-size:12.2px;color:#000">CirPattern1</div>
<svg class="a" style="left:21px;top:581px" width="17" height="17" viewBox="0 0 17 17"><g fill="#f0d020" stroke="#108010" stroke-width="1.7"><rect x="5" y="1" width="6.5" height="4.5" rx="2"/><rect x="5" y="11.5" width="6.5" height="4.5" rx="2"/><rect x="1" y="5.5" width="4.5" height="6" rx="2"/><rect x="11" y="5.5" width="4.5" height="6" rx="2"/></g></svg>
<div class="t" style="left:42px;top:602px;font-size:12.2px;color:#000">DeleteFace1</div>
<svg class="a" style="left:21px;top:599px" width="17" height="17" viewBox="0 0 17 17"><circle cx="6" cy="6.5" r="5.5" fill="#f0e070" stroke="#8a7010" stroke-width="0.8"/><circle cx="10" cy="10.5" r="5.3" fill="#8a8a8a" stroke="#333" stroke-width="0.9"/><path d="M8 8.5 L12 12.5 M12 8.5 L8 12.5" stroke="#111" stroke-width="1.5"/></svg>
<div class="t" style="left:42px;top:620px;font-size:12.2px;color:#000">Plane3</div>
<svg class="a" style="left:21px;top:617px" width="17" height="17" viewBox="0 0 17 17"><path d="M8 2.5 L14 8.5 L8 14.5 L2 8.5z" fill="none" stroke="#111" stroke-width="1.2"/><path d="M0.5 1 L4 4.5 M12 12.5 L15.5 16 M6 8.5 L8 10.5" stroke="#111" stroke-width="1.1"/></svg>
<div class="t" style="left:42px;top:638px;font-size:12.2px;color:#000">SurfaceCut2</div>
<svg class="a" style="left:21px;top:635px" width="17" height="17" viewBox="0 0 17 17"><path d="M1.5 11 L4.5 9 H15.5 V15.5 H4.5 L1.5 13.5z" fill="#f2b428" stroke="#111" stroke-width="1" stroke-linejoin="round"/><path d="M4.5 9 H15.5 L13 11.5 H1.5z" fill="#ffd860" stroke="#111" stroke-width="0.9" stroke-linejoin="round"/><path d="M1.5 2 Q1.5 1.2 2.5 1.2 H12 L15.5 4 V7.5 H5 L1.5 5.5z" fill="#d0d0d0" stroke="#111" stroke-width="1" stroke-linejoin="round"/><path d="M5 4 H15.5 M5 4 V7.5" stroke="#111" stroke-width="0.9" fill="none"/><path d="M6 5.5 H14.5" stroke="#fff" stroke-width="1.1"/></svg>
<svg class="a" style="left:0;top:205px" width="60" height="450" viewBox="0 205 60 450"><g stroke="#7a7a7a" stroke-width="1" stroke-dasharray="1 1" fill="none"><path d="M10.5 206 V644"/><path d="M11 212.5 H20"/><path d="M11 230.5 H20"/><path d="M11 248.5 H20"/><path d="M11 266.5 H20"/><path d="M11 284.5 H20"/><path d="M11 302.5 H20"/><path d="M11 320.5 H20"/><path d="M11 338.5 H20"/><path d="M11 356.5 H20"/><path d="M11 374.5 H20"/><path d="M11 392.5 H20"/><path d="M30 410.5 H39"/><path d="M30 428.5 H39"/><path d="M30 446.5 H39"/><path d="M11 464.5 H20"/><path d="M11 482.5 H20"/><path d="M30 500.5 H39"/><path d="M30 518.5 H39"/><path d="M11 536.5 H20"/><path d="M11 554.5 H20"/><path d="M11 572.5 H20"/><path d="M11 590.5 H20"/><path d="M11 608.5 H20"/><path d="M11 626.5 H20"/><path d="M11 644.5 H20"/><path d="M29.5 400 V446 M29.5 490 V518"/></g><rect x="6.5" y="208.5" width="8" height="8" fill="#f4f4f6" stroke="#8a8c90"/><path d="M8.5 212.5 H12.5" stroke="#333"/><path d="M10.5 210.5 V214.5" stroke="#333"/><rect x="6.5" y="244.5" width="8" height="8" fill="#f4f4f6" stroke="#8a8c90"/><path d="M8.5 248.5 H12.5" stroke="#333"/><path d="M10.5 246.5 V250.5" stroke="#333"/><rect x="6.5" y="280.5" width="8" height="8" fill="#f4f4f6" stroke="#8a8c90"/><path d="M8.5 284.5 H12.5" stroke="#333"/><path d="M10.5 282.5 V286.5" stroke="#333"/><rect x="6.5" y="388.5" width="8" height="8" fill="#f4f4f6" stroke="#8a8c90"/><path d="M8.5 392.5 H12.5" stroke="#333"/><rect x="6.5" y="478.5" width="8" height="8" fill="#f4f4f6" stroke="#8a8c90"/><path d="M8.5 482.5 H12.5" stroke="#333"/><rect x="25.5" y="496.5" width="8" height="8" fill="#f4f4f6" stroke="#8a8c90"/><path d="M27.5 500.5 H31.5" stroke="#333"/><path d="M29.5 498.5 V502.5" stroke="#333"/></svg>
<div class="a" style="left:0;top:653px;width:219px;height:2px;background:#2a62b8"></div>
<!-- left scrollbar -->
<div class="a" style="left:0;top:946px;width:219px;height:17px;background:#eeeff1"></div>
<div class="a" style="left:16px;top:947px;width:113px;height:15px;background:#c9cacc"></div>
<svg class="a" style="left:0;top:946px" width="219" height="17" viewBox="0 946 219 17"><path d="M9 951 L6 954.5 L9 958 M210 951 L213 954.5 L210 958" fill="none" stroke="#555" stroke-width="1.4"/></svg>
<!-- graphics area -->
<div class="a" style="left:221px;top:131px;width:941px;height:835px;background:#fff"></div>
<div class="a" style="left:218px;top:131px;width:1px;height:835px;background:#b0b2b6"></div><div class="a" style="left:219px;top:131px;width:1px;height:835px;background:#111"></div><div class="a" style="left:220px;top:131px;width:1px;height:835px;background:#666"></div>
<!-- collapse handle -->
<svg class="a" style="left:218px;top:518px" width="12" height="42" viewBox="218 518 12 42"><path d="M219 520.5 H226.5 V557.5 H219" fill="#e2e4e9" stroke="#333"/><path d="M225 529 L222 531 L225 533z M225 537 L222 539 L225 541z M225 545 L222 547 L225 549z" fill="#222"/></svg>

<!-- window controls -->
<svg class="a" style="left:1040px;top:116px" width="115" height="20" viewBox="1040 116 115 20">
<g fill="none" stroke="#7a7a7a" stroke-width="1">
<rect x="1044.5" y="120.5" width="12" height="12"/><rect x="1050.5" y="123.5" width="3" height="6"/><path d="M1047 124 V129 M1047 126.5 L1049 124.5 M1047 126.5 L1049 128.5"/>
<rect x="1067.5" y="120.5" width="12" height="12"/><rect x="1070.5" y="123.5" width="3" height="6"/><path d="M1077 124 L1075 126.5 L1077 129"/>
<rect x="1090.5" y="128.5" width="11" height="4"/>
<rect x="1111.5" y="124.5" width="10" height="8"/><path d="M1114.5 124.5 V120.5 H1126.5 V129.5 H1121.5"/><rect x="1113.5" y="126.5" width="6" height="4"/>
<path d="M1136.5 121.5 L1148.5 132 M1148.5 121.5 L1136.5 132" stroke-width="2.2"/>
</g>
<path d="M1137.5 122 L1147.5 131.5 M1147.5 122 L1137.5 131.5" stroke="#fff" stroke-width="0.8"/>
</svg>
<!-- heads-up toolbar -->
<svg class="a" style="left:535px;top:136px" width="305" height="24" viewBox="535 136 305 24">
<g transform="translate(540,140)"><circle cx="7" cy="7" r="5.5" fill="#e8eef4" stroke="#8a9098" stroke-width="1.2"/><path d="M11 11 L16 16" stroke="#6a8ab0" stroke-width="2.4"/><path d="M5 5 h4 v4 h-4z" fill="none" stroke="#5a6a7a" stroke-dasharray="1.5 1"/></g>
<g transform="translate(563,140)"><circle cx="7" cy="7" r="5.5" fill="#eef2f6" stroke="#8a9098" stroke-width="1.2"/><path d="M11 11 L16 16" stroke="#6a8ab0" stroke-width="2.4"/><path d="M3 3 h8 v8 h-8z" fill="none" stroke="#444" stroke-dasharray="1.5 1"/></g>
<g transform="translate(586,140)"><path d="M2 6 L9 13 Q11 15 13 13 L14 12 Q15 10 13 8 L6 2z" fill="#cfe0f0" stroke="#3a5a8a" stroke-width="1"/><path d="M10 4 H16 M10 4 L12 2 M10 4 L12 6" stroke="#3a6ab0" stroke-width="1.2" fill="none"/></g>
<g transform="translate(610,140)"><path d="M1 3 Q8 -1 15 3 V15 Q8 19 1 15z" fill="#e8e8e8" stroke="#444" stroke-width="0.9"/><path d="M3 4 V15 M13 4 V15" stroke="#e8c020" stroke-width="2.2"/><path d="M5 4 Q8 6 11 4 V15 Q8 17 5 15z" fill="#6a8ab0"/></g>
<g transform="translate(632,140)"><path d="M1 5 L5 1 H16 V12 L12 16 H1z" fill="#a8cdf0" stroke="#2a5a9a" stroke-width="1"/><path d="M1 5 H12 V16 M12 5 L16 1" stroke="#2a5a9a" fill="none"/><path d="M8 3 V8 H14" stroke="#c03030" stroke-width="0.8" fill="none"/></g>
<path d="M657 149 h5 l-2.5 3z" fill="#333"/>
<g transform="translate(669,140)"><path d="M1 5 L5 1 H16 V12 L12 16 H1z" fill="#fff" stroke="#3a5a8a" stroke-width="1"/><path d="M12 5 L16 1 V12 L12 16z" fill="#7aa8e0"/><path d="M1 5 H12 V16 M12 5 L16 1" stroke="#3a5a8a" fill="none"/><path d="M8 5 V16" stroke="#c8dcf0" stroke-width="3"/></g>
<path d="M694 149 h5 l-2.5 3z" fill="#333"/>
<g transform="translate(706,141)" fill="none" stroke="#8a8a8a" stroke-width="1.2"><circle cx="4" cy="9" r="3.2"/><circle cx="13" cy="10" r="3.2"/><path d="M7 9 Q8.5 8 10 9 M1 8 Q1 3 4 2"/></g>
<path d="M731 149 h5 l-2.5 3z" fill="#333"/>
<g transform="translate(743,140)"><circle cx="8.5" cy="8.5" r="8" fill="#e83030"/><path d="M8.5 8.5 V0.5 A8 8 0 0 0 0.5 8.5z" fill="#2a6ae8"/><path d="M8.5 8.5 H0.5 A8 8 0 0 0 8.5 16.5z" fill="#28b040"/><path d="M8.5 8.5 V16.5 A8 8 0 0 0 16.5 8.5z" fill="#f4c820"/><ellipse cx="5.7" cy="4.9" rx="2.4" ry="1.6" fill="#fff" opacity="0.6"/></g>
<g transform="translate(767,140)"><circle cx="8" cy="7" r="6.5" fill="#e83030"/><path d="M8 7 V0.5 A6.5 6.5 0 0 0 1.5 7z" fill="#2a6ae8"/><path d="M8 7 H1.5 A6.5 6.5 0 0 0 8 13.5z" fill="#28b040"/><path d="M8 7 V13.5 A6.5 6.5 0 0 0 14.5 7z" fill="#f4c820"/><ellipse cx="5.725" cy="4.074999999999999" rx="1.95" ry="1.3" fill="#fff" opacity="0.6"/><path d="M1 13 L4 16 L7 13 L10 16 L13 13 L16 16" stroke="#c03030" fill="none" stroke-width="1.2"/></g>
<path d="M791 149 h5 l-2.5 3z" fill="#333"/>
<g transform="translate(803,140)"><rect x="1.5" y="3.5" width="14" height="10" fill="#e8e8e8" stroke="#555"/><path d="M4 11 L7 7 L10 9 L14 5" stroke="#777" fill="none"/><path d="M6 16 H11 M8.5 13.5 V16" stroke="#555"/><path d="M10 4 L14 1 L17 3" stroke="#c8a060" stroke-width="1.6" fill="none"/></g>
<path d="M828 149 h5 l-2.5 3z" fill="#333"/>
</svg>
<!-- task pane tabs -->
<div class="a" style="left:1137px;top:172px;width:25px;height:23px;background:#b4b6ba;border:1px solid #111;border-bottom-width:2px;border-right:none"></div>
<div class="a" style="left:1137px;top:196px;width:25px;height:23px;background:#b4b6ba;border:1px solid #111;border-bottom-width:2px;border-right:none"></div>
<div class="a" style="left:1137px;top:220px;width:25px;height:23px;background:#b4b6ba;border:1px solid #111;border-bottom-width:2px;border-right:none"></div>
<div class="a" style="left:1137px;top:245px;width:25px;height:22px;background:#b4b6ba;border:1px solid #111;border-bottom-width:2px;border-right:none"></div>
<div class="a" style="left:1137px;top:268px;width:25px;height:23px;background:#b4b6ba;border:1px solid #111;border-bottom-width:2px;border-right:none"></div>
<div class="a" style="left:1137px;top:293px;width:25px;height:22px;background:#e4e6ea"></div>
<div class="a" style="left:1137px;top:316px;width:25px;height:23px;background:#b4b6ba;border:1px solid #111;border-bottom-width:2px;border-right:none"></div>
<svg class="a" style="left:1137px;top:170px" width="25" height="172" viewBox="1137 170 25 172">
<g transform="translate(1141,175)"><rect x="1" y="1" width="11" height="8" fill="#6ab0f0" stroke="#2a70c0"/><rect x="5" y="5" width="11" height="8" fill="#a8e040" stroke="#6a9a10"/><path d="M8 13 L7 16 L11 13" fill="#a8e040"/></g>
<g transform="translate(1141,199)"><path d="M1 9 L8.5 2 L16 9" fill="none" stroke="#c05010" stroke-width="1.6"/><path d="M3 8 V16 H14 V8 L8.5 3z" fill="#f8e070" stroke="#7a5a10"/><rect x="7" y="10" width="3" height="6" fill="#7a5a10"/><rect x="12" y="2" width="2" height="4" fill="#c03010"/></g>
<g transform="translate(1141,223)"><rect x="1" y="8" width="5" height="8" fill="#30b030" stroke="#106010" stroke-width="0.7"/><rect x="6" y="5" width="5" height="11" fill="#f0d020" stroke="#806000" stroke-width="0.7"/><rect x="11" y="2" width="5" height="14" fill="#5090e0" stroke="#204a90" stroke-width="0.7"/></g>
<g transform="translate(1141,247)"><path d="M1 4 H6 L7 5 H14 V14 H1z" fill="#e8c040" stroke="#8a6a10"/><path d="M3 8 H16 L14 15 H1z" fill="#f8e080" stroke="#8a6a10"/></g>
<g transform="translate(1141,271)"><rect x="1.5" y="1.5" width="15" height="10" fill="#e8eef6" stroke="#445"/><rect x="3" y="3" width="5" height="2" fill="#6a8"/><rect x="10" y="3" width="5" height="2" fill="#468"/><rect x="3" y="7" width="5" height="2" fill="#6a8"/><rect x="10" y="7" width="5" height="2" fill="#468"/><path d="M2 15 H8 M6 13 L8 15 L6 17" stroke="#1a3ad0" stroke-width="1.6" fill="none"/></g>
<g transform="translate(1141,296)"><circle cx="8.5" cy="8" r="7.5" fill="#e83030"/><path d="M8.5 8 V0.5 A7.5 7.5 0 0 0 1.0 8z" fill="#2a6ae8"/><path d="M8.5 8 H1.0 A7.5 7.5 0 0 0 8.5 15.5z" fill="#28b040"/><path d="M8.5 8 V15.5 A7.5 7.5 0 0 0 16.0 8z" fill="#f4c820"/><ellipse cx="5.875" cy="4.625" rx="2.25" ry="1.5" fill="#fff" opacity="0.6"/></g>
<g transform="translate(1141,320)"><path d="M2 8 H15 V16 H2z" fill="#f4f4f4" stroke="#555"/><path d="M3 8 L8 3 L16 5 L14 9" fill="#d8b070" stroke="#7a5a20"/><path d="M4 11 H13 M4 13.5 H13" stroke="#999"/></g>
</svg>
<!-- triad -->
<svg class="a" style="left:222px;top:868px" width="50" height="50" viewBox="222 868 50 50">
<path d="M257.5 872 L260.5 875.5 L263.5 872 M260.5 875.5 V879" stroke="#1a4a1a" fill="none" stroke-width="1"/>
<path d="M260 880 L256.5 887 H258.5 V907 H262 V887 H264z" fill="#2a9a3a" stroke="#1a6a1a" stroke-width="0.6"/>
<path d="M255 889 H259 L255 895 H259" stroke="#2030d0" fill="none" stroke-width="1"/><ellipse cx="257" cy="898" rx="2.5" ry="3" fill="#2030c0"/>
<path d="M261 906.5 L240 908 V905 L231 909 L240 913 V910.5 L262 909z" fill="#d82020" stroke="#901010" stroke-width="0.6"/>
<path d="M225 906 L230 913 M230 906 L225 913" stroke="#a01818" stroke-width="1"/>
</svg>
<!-- dodecahedron -->
<svg class="a" style="left:0;top:0" width="1475" height="1000" viewBox="0 0 1475 1000">
<defs><filter id="blur" x="-10%" y="-10%" width="120%" height="120%"><feGaussianBlur stdDeviation="1.2"/></filter>
<radialGradient id="sg" gradientUnits="userSpaceOnUse" cx="760" cy="740" r="400"><stop offset="0" stop-color="#646464"/><stop offset="0.55" stop-color="#6c6c6c"/><stop offset="1" stop-color="#7c7c7c"/></radialGradient></defs>
<polygon filter="url(#blur)" fill="url(#sg)" points="479,768.5 496.6,790.2 690.5,844.4 792.2,855.3 1033.3,825.5 1084.6,793 1130.6,708 1110.3,686.4 914.5,631.9 899.7,631 820,748 660,808.5"/>
<g stroke="#111" stroke-width="1" stroke-linejoin="round">
<polygon fill="#d3daf8" points="616.6,230.2 798.4,270.8 751.7,357.1 539.3,369.3 456,292"/>
<polygon fill="#aeb3cf" points="456,292 539.3,369.3 486.4,575.3 369.8,623 351.4,448.6"/>
<polygon fill="#7b808f" points="798.4,270.8 906.2,415.3 924.1,590.4 829.8,555.2 751.7,357.1"/>
<polygon fill="#c3c7e3" points="539.3,369.3 751.7,357.1 829.8,555.2 665.4,688.1 486.4,575.3"/>
<polygon fill="#45464f" points="369.8,623 486.4,575.3 665.4,688.1 660,808.5 478.3,767.8"/>
<polygon fill="#4e4f5c" points="665.4,688.1 829.8,555.2 924.1,590.4 820,747.7 660,808.5"/>
</g>
</svg>
<!-- right pane -->
<div class="a" style="left:1162px;top:112px;width:1px;height:870px;background:#111"></div><div class="a" style="left:1163px;top:112px;width:1px;height:870px;background:#8a8c90"></div>
<div class="a" style="left:1164px;top:112px;width:311px;height:870px;background:#e2e4e9"></div>
<div class="a" style="left:1164px;top:112px;width:311px;height:1px;background:#1a1a1a"></div>
<div class="a" style="left:1164px;top:113px;width:311px;height:18px;background:linear-gradient(#bcbec2,#b0b2b6)"></div>
<div class="a" style="left:1164px;top:131px;width:311px;height:1px;background:#1a1a1a"></div>
<div class="a" style="left:1164px;top:132px;width:311px;height:30px;background:#dcdee2"></div>
<div class="a" style="left:1164px;top:162px;width:311px;height:1px;background:#1a1a1a"></div>
<svg class="a" style="left:1164px;top:113px" width="311" height="50" viewBox="1164 113 311 50">
<path d="M1177 117.5 L1173 121.5 L1177 125.5 M1181 117.5 L1177 121.5 L1181 125.5" fill="none" stroke="#111" stroke-width="1.5"/>
<g transform="translate(1459,114)"><path d="M3.5 11.5 L1 14" stroke="#111" stroke-width="1.6"/><ellipse cx="5" cy="9" rx="3" ry="3.6" transform="rotate(35 5 9)" fill="#d6d6d8" stroke="#333" stroke-width="0.9"/><circle cx="8.5" cy="5" r="3.3" fill="#ececee" stroke="#333" stroke-width="0.9"/><circle cx="8" cy="4.5" r="1.5" fill="#fff"/></g>
<g opacity="0.95">
<g transform="translate(1169,138)"><circle cx="9" cy="9.5" r="6.5" fill="#b8b8b8" stroke="#a0a0a0"/><path d="M1 5 H9 M5 1 V9" stroke="#a8a8a8" stroke-width="2.2"/></g>
<g transform="translate(1192,138)"><path d="M1 5 H6 L7 6 H14 V15 H1z" fill="#d0d0d0" stroke="#a0a0a0"/><path d="M2 8 H16 L14 15 H1z" fill="#d0d0d0" stroke="#a0a0a0"/><path d="M13 1 V5 M11 3 H15" stroke="#b0b0b0"/></g>
<g transform="translate(1215,138)"><path d="M1 5 H6 L7 6 H14 V15 H1z" fill="#d8d8d8" stroke="#a8a8a8"/><path d="M13 1 V5 M11 3 H15" stroke="#b0b0b0"/></g>
<g transform="translate(1263,138)"><path d="M5 15 V7 L2 7 L7 1 L12 7 H9 V15" fill="#d8d8d8" stroke="#a8a8a8"/></g>
</g>
<g transform="translate(1240,138)"><path d="M1.5 1.5 H9 L12.5 5 V16.5 H1.5z" fill="#d8f4d8" stroke="#1a3a1a" stroke-width="1.1"/><path d="M3.5 9 Q4 4.5 9 5.5 M10 9.5 Q10 14 5 13" stroke="#10a020" stroke-width="2.2" fill="none"/><path d="M8 3.5 L10.5 6 L7.5 7.5z M6 15 L3.5 12.5 L6.5 11z" fill="#10a020"/></g>
</svg>
<div class="t" style="left:1230px;top:114px;font-size:11.3px;font-weight:bold;color:#000">Appearances, Scenes, and Decals</div>
<svg class="a" style="left:1164px;top:165px" width="60" height="60" viewBox="1164 165 60 60">
<g stroke="#8a8a8a" stroke-dasharray="1 1" fill="none"><path d="M1175.5 185 V213 M1180 180.5 H1186 M1180 198.5 H1186 M1180 216.5 H1186"/></g>
<g fill="#f4f4f6" stroke="#8a8c90"><rect x="1171.5" y="176.5" width="8" height="8"/><rect x="1171.5" y="194.5" width="8" height="8"/><rect x="1171.5" y="212.5" width="8" height="8"/></g>
<path d="M1173.5 180.5 H1177.5 M1175.5 178.5 V182.5 M1173.5 198.5 H1177.5 M1175.5 196.5 V200.5 M1173.5 216.5 H1177.5 M1175.5 214.5 V218.5" stroke="#333"/>
<g transform="translate(1186,171)"><circle cx="7.5" cy="7.5" r="7.5" fill="#e83030"/><path d="M7.5 7.5 V0.0 A7.5 7.5 0 0 0 0.0 7.5z" fill="#2a6ae8"/><path d="M7.5 7.5 H0.0 A7.5 7.5 0 0 0 7.5 15.0z" fill="#28b040"/><path d="M7.5 7.5 V15.0 A7.5 7.5 0 0 0 15.0 7.5z" fill="#f4c820"/><ellipse cx="4.875" cy="4.125" rx="2.25" ry="1.5" fill="#fff" opacity="0.6"/></g>
<g transform="translate(1186,189)"><circle cx="7.5" cy="7" r="6.5" fill="#e83030"/><path d="M7.5 7 V0.5 A6.5 6.5 0 0 0 1.0 7z" fill="#2a6ae8"/><path d="M7.5 7 H1.0 A6.5 6.5 0 0 0 7.5 13.5z" fill="#28b040"/><path d="M7.5 7 V13.5 A6.5 6.5 0 0 0 14.0 7z" fill="#f4c820"/><ellipse cx="5.225" cy="4.074999999999999" rx="1.95" ry="1.3" fill="#fff" opacity="0.6"/><path d="M0 15 h3 v-3 h3 v3 h3 v-3 h3 v3 h3" fill="none" stroke="#111" stroke-width="1.3"/></g>
<g transform="translate(1187,207)"><path d="M1 3 V13 Q7 16 13 13 V3" fill="#f0c020" stroke="#8a6a10"/><ellipse cx="7" cy="3" rx="6" ry="2.5" fill="#f8e070" stroke="#8a6a10"/><path d="M1 7 Q7 10 13 7 V10 Q7 13 1 10z" fill="#30a040"/><rect x="5" y="7" width="4" height="4" fill="#e03030"/></g>
</svg>
<div class="t" style="left:1207px;top:172px;font-size:11.7px;color:#000">Appearances(color)</div>
<div class="t" style="left:1207px;top:190px;font-size:11.7px;color:#000;letter-spacing:-0.45px">Scenes</div>
<div class="t" style="left:1207px;top:208px;font-size:11.7px;color:#000">Decals</div>
<!-- separators and yellow box -->
<div class="a" style="left:1165px;top:480px;width:310px;height:5px;background:linear-gradient(#7a7c88 0,#7a7c88 1px,#b8bac4 1px,#b8bac4 3px,#6e7080 3px,#6e7080 5px)"></div>
<div class="a" style="left:1169px;top:491px;width:303px;height:60px;background:#ffff80;border:1px solid #222"></div>
<div class="t" style="left:1169px;width:303px;text-align:center;top:495px;font-size:12px;color:#000">Select items to drag and drop.</div>
<div class="a" style="left:1165px;top:557px;width:310px;height:5px;background:linear-gradient(#7a7c88 0,#7a7c88 1px,#b8bac4 1px,#b8bac4 3px,#6e7080 3px,#6e7080 5px)"></div>
<svg class="a" style="left:1305px;top:555px" width="30" height="8" viewBox="1305 555 30 8"><path d="M1310 562 L1312.5 558 L1315 562z M1318 562 L1320.5 558 L1323 562z M1326 562 L1328.5 558 L1331 562z" fill="#111"/></svg>
<!-- bottom tabs -->
<div class="a" style="left:0;top:963px;width:219px;height:2px;background:#a8aaae"></div>
<div class="a" style="left:0;top:965px;width:1162px;height:17px;background:#e2e4e8"></div>
<div class="a" style="left:0;top:966px;width:1162px;height:1px;background:#111"></div>
<div class="a" style="left:2px;top:967px;width:66px;height:14px;background:#b8babd"></div>
<div class="a" style="left:18px;top:967px;width:1px;height:14px;background:#d0d2d5"></div>
<div class="a" style="left:35px;top:967px;width:1px;height:14px;background:#d0d2d5"></div>
<div class="a" style="left:51px;top:967px;width:1px;height:14px;background:#d0d2d5"></div>
<svg class="a" style="left:2px;top:967px" width="66" height="14" viewBox="2 967 66 14"><g fill="#9a9ca0"><path d="M7 970 V978 H8 V970z M13 970 L9 974 L13 978z M28 970 L24 974 L28 978z M40 970 L44 974 L40 978z M55 970 L59 974 L55 978z M60 970 V978 H61 V970z"/></g></svg>
<div class="a" style="left:69px;top:966px;width:56px;height:15px;background:#e2e4e8;border-right:1px solid #2a2a2a;border-bottom:2px solid #2a2a2a"></div>
<div class="t" style="left:69px;width:56px;text-align:center;top:966px;font-size:12.5px;font-weight:bold;color:#000">Model</div>
<div class="a" style="left:125px;top:966px;width:104px;height:14px;background:#b6b8bb;border:1px solid #2a2a2a;border-left:none"></div>
<div class="t" style="left:133px;top:966px;font-size:12.1px;color:#000">Motion Study 1</div>
<div class="a" style="left:1159px;top:967px;width:1px;height:14px;background:#b8babe"></div>
<div class="a" style="left:0;top:981px;width:1475px;height:1px;background:#2a2a2a"></div>
<!-- status bar -->
<div class="a" style="left:0;top:982px;width:1475px;height:18px;background:#dcdee2"></div>
<div class="t" style="left:2px;top:984px;font-size:11.6px;color:#000">SolidWorks Professional 2014 x64 Edition</div>
<div class="t" style="left:1180px;top:985px;font-size:11.8px;color:#000">Editing Part</div>
<div class="t" style="left:1294px;top:985px;font-size:11.4px;color:#000">MMGS</div>
<svg class="a" style="left:1340px;top:982px" width="135" height="18" viewBox="1340 982 135 18">
<path d="M1349 994 L1352 990.5 L1355 994z" fill="#333"/>
<rect x="1371.5" y="984.5" width="13" height="13" fill="#f4f8f4" stroke="#2a4a8a"/><text x="1374.5" y="995.5" font-family="Liberation Sans" font-size="11" font-weight="bold" fill="#20a020">?</text>
<g transform="translate(1434,983)"><path d="M1 9 L8 2 L14 1 L15 7 L8 14z" fill="#f0c830" stroke="#7a5a10"/><circle cx="11.5" cy="4.5" r="1.5" fill="#fff" stroke="#7a5a10" stroke-width="0.6"/></g>
<g fill="#b0b0b0"><rect x="1470" y="995" width="2" height="2"/><rect x="1466" y="995" width="2" height="2"/><rect x="1470" y="991" width="2" height="2"/></g>
</svg>
</body></html>
